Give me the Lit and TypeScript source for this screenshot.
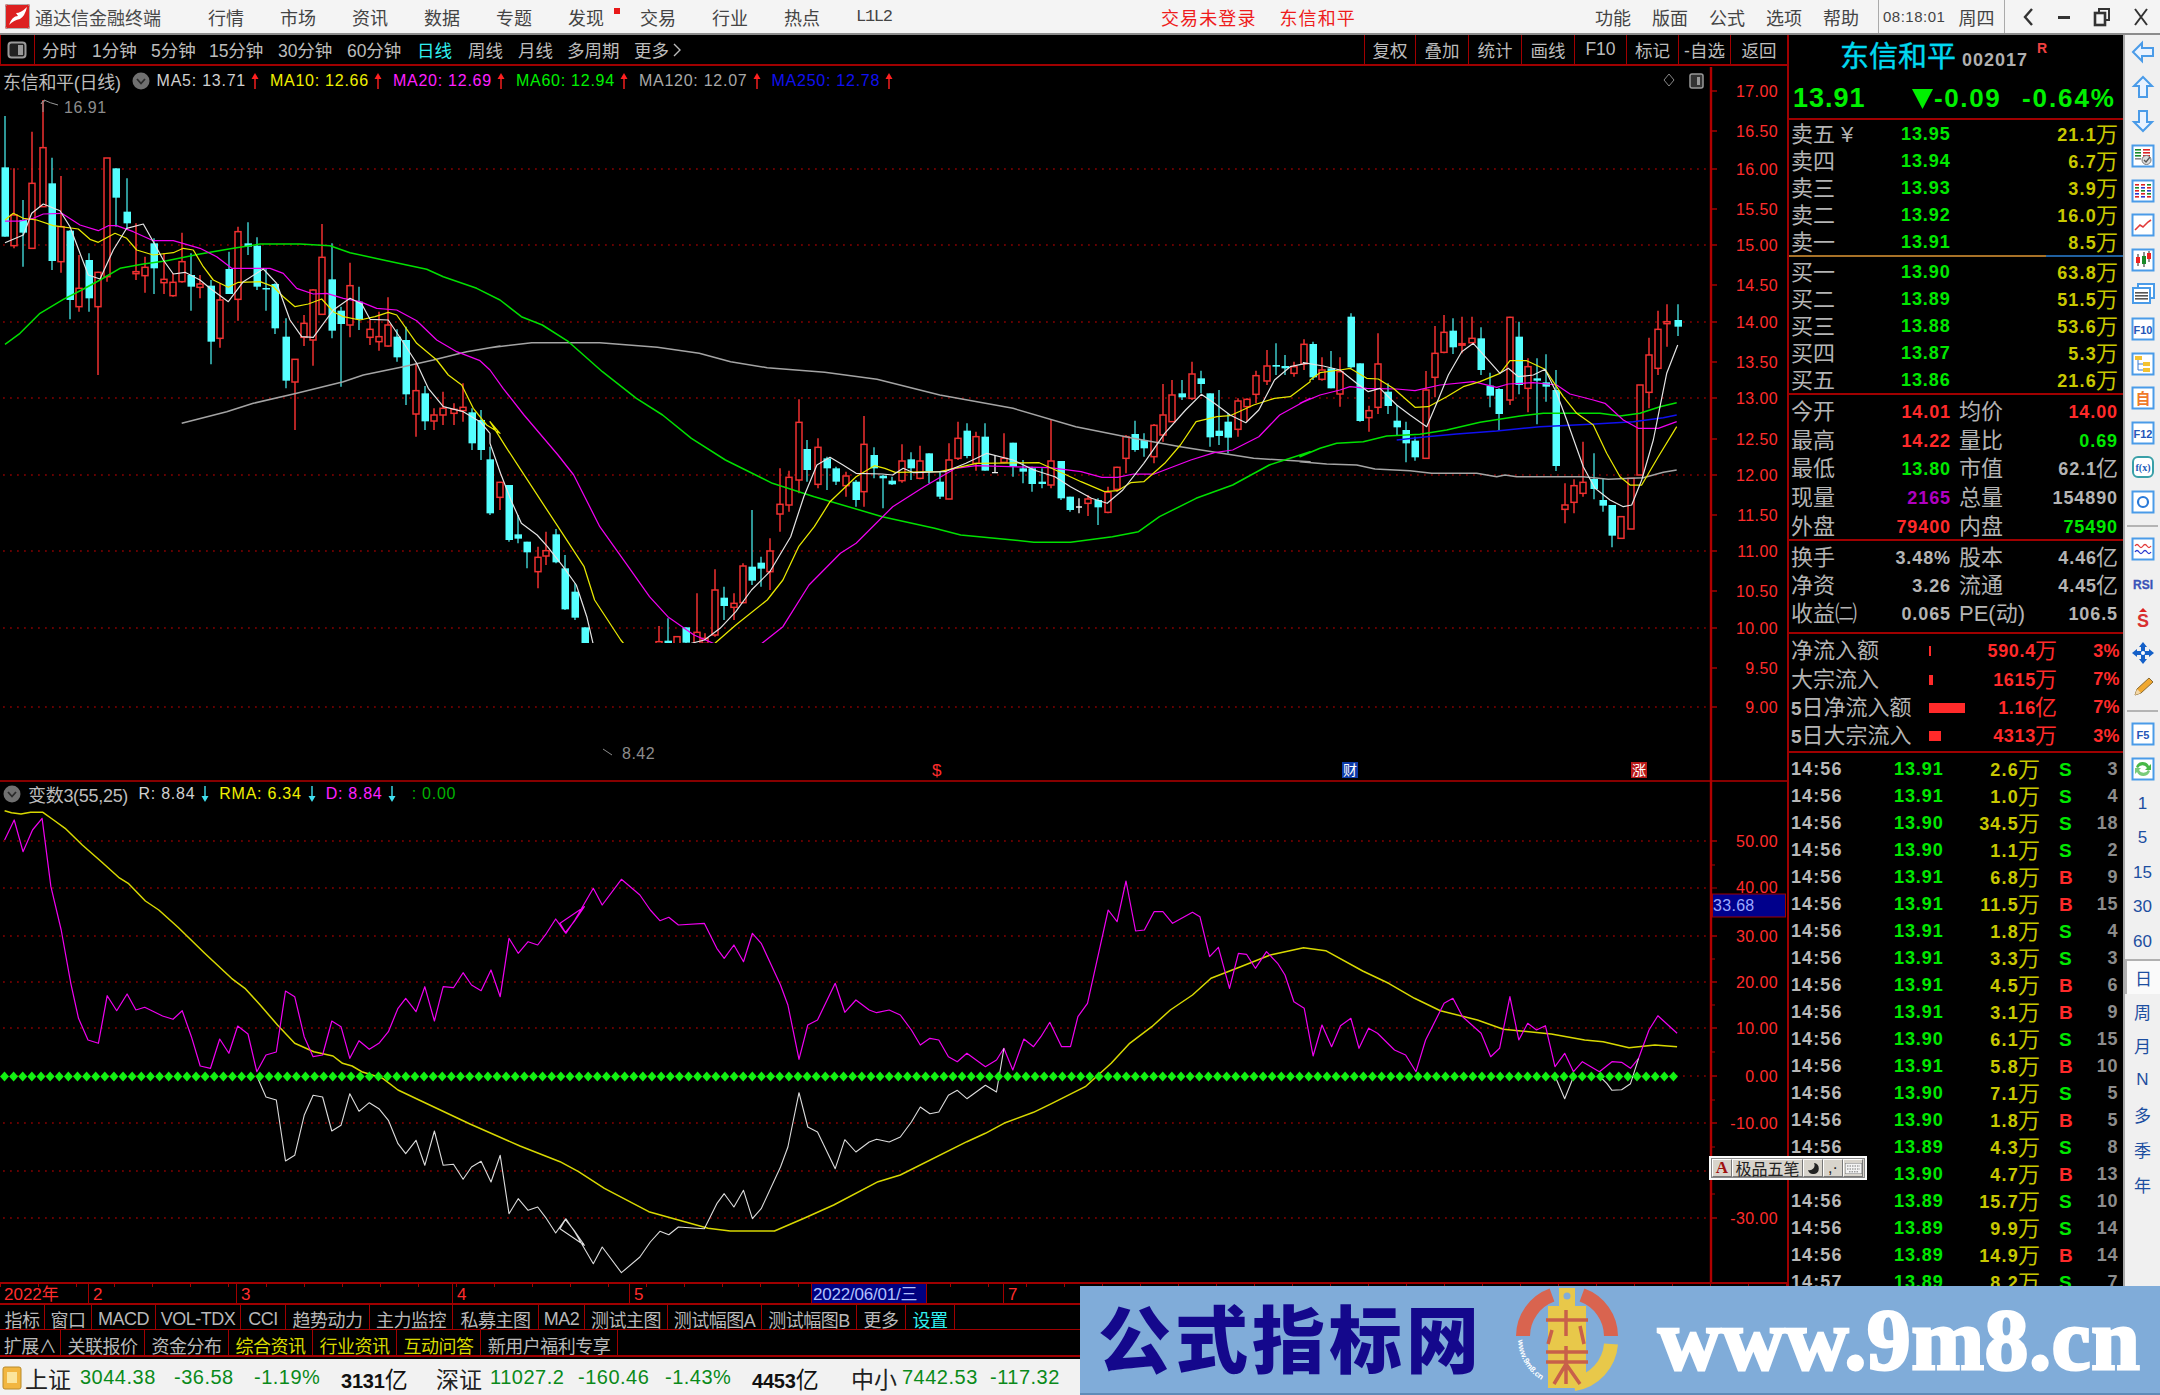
import { LitElement, html, css, svg } from "lit";
import { customElement } from "lit/decorators.js";

type C = [number, number, number, number, number, number];
type P = [number, number];
const CY = 0, RD = 1, WH = 2;

// candle readings: [x, kind, wick top, body top, body bottom, wick bottom], per crop's scale
const c7: C[] = [
[15,CY,108,262,470,470],[42,RD,265,405,497,505],[69,CY,360,420,458,560],[96,RD,155,310,505,505],[128,RD,60,203,380,380],
[155,CY,233,310,543,570],[182,RD,288,440,545,578],[209,CY,450,452,660,718],[236,RD,525,625,680,695],[267,CY,520,540,655,695],
[294,RD,575,577,680,885],[321,RD,234,234,590,605],[348,CY,265,265,353,440],[380,CY,295,395,430,450],[407,RD,430,575,581,600],
[434,RD,530,562,587,638],[461,CY,475,490,565,642],[492,RD,520,598,608,642],[519,RD,580,607,647,650],[546,RD,458,545,605,608],
[573,CY,520,585,620,692],[600,RD,585,612,622,655],[632,CY,600,617,785,853],[659,RD,610,660,775,803],[686,CY,515,567,642,642],
[713,RD,440,455,658,722],[744,CY,427,490,500,525],[771,CY,472,497,620,630],[798,CY,565,624,628,692],[825,CY,610,612,745,762],
[857,CY,715,770,902,925],[884,RD,838,838,906,1050],[911,RD,705,730,772,798],[938,RD,628,630,780,857],[965,RD,432,532,703,705],
[997,CY,490,598,752,775],[1024,CY,680,692,732,920],[1051,RD,548,617,735,772],[1078,CY,620,665,718,750],[1109,RD,720,748,772,795],
[1136,RD,695,770,785,812],[1163,RD,652,735,798,800],[1190,CY,748,770,832,845],[1217,CY,740,780,943,975],[1249,RD,850,932,1002,1070],
[1276,CY,918,940,1024,1050],[1303,RD,985,1005,1023,1050],[1330,RD,935,985,1005,1035],[1361,RD,970,988,1000,1035],[1388,RD,910,982,992,1025],
[1415,CY,985,997,1090,1110],[1443,CY,990,1020,1110,1140]];
const c11: C[] = [
[0,CY,440,478,640,645],[19,RD,545,547,592,630],[36,CY,555,555,720,725],[53,CY,645,703,716,730],[70,CY,725,725,757,805],
[91,RD,740,772,815,865],[108,RD,695,752,768,795],[126,CY,687,703,787,790],[143,CY,765,805,928,930],[163,CY,850,875,953,960],
[181,CY,982,982,1100,1100],[323,RD,978,1025,1100,1100],[341,CY,955,1022,1100,1100],[358,RD,1010,1010,1100,1100],[375,CY,982,982,1028,1060],
[395,RD,880,997,1100,1100],[412,RD,1000,1015,1030,1100],[430,RD,808,870,1005,1010],[447,CY,860,893,918,960],[467,RD,880,910,922,960],
[484,RD,790,798,908,910],[501,CY,630,800,842,855],[519,CY,770,788,806,860],[536,RD,715,753,815,870],[555,RD,505,613,642,695],
[572,RD,512,532,615,635],[590,RD,298,367,540,580],[607,CY,420,447,510,545],[627,RD,415,442,553,565],[645,CY,470,475,505,570],
[662,CY,500,505,545,555],[680,RD,515,528,557,590],[699,CY,540,545,600,620],[716,RD,348,433,575,620],[734,CY,442,465,505,535],
[751,CY,525,527,535,625],[768,CY,530,542,553,555],[787,RD,433,483,542,548],[805,CY,457,478,505,540],[822,RD,437,483,535,538],
[840,CY,460,460,515,550],[860,CY,515,545,590,597],[877,RD,430,480,597,598],[894,RD,365,415,475,480],[912,CY,370,392,468,475],
[929,RD,395,410,490,512],[947,CY,370,410,512,512],[965,WH,465,515,517,520],[983,RD,400,475,487,490],[1000,CY,428,428,500,530],
[1020,CY,480,505,515,550],[1037,CY,500,505,552,575],[1055,CY,505,545,552,565],[1072,RD,360,483,555,565],[1091,CY,483,483,595,600],
[1109,CY,590,590,630,635],[1126,WH,595,618,622,640],[1144,RD,585,597,610,648],[1162,CY,595,600,622,675],[1181,RD,560,577,637,640],
[1198,RD,500,502,568,575],[1216,RD,405,410,475,520],[1233,CY,362,402,450,455],[1251,CY,400,420,445,470],[1269,RD,372,376,470,490],
[1287,RD,252,345,405,425],[1304,RD,240,285,365,365],[1324,CY,240,280,292,300],[1342,RD,185,222,295,300],[1359,CY,212,235,252,280],
[1376,CY,280,280,412,440],[1394,CY,270,392,408,435],[1412,CY,340,365,413,460],[1430,RD,295,303,388,410],[1448,RD,295,298,320,365],
[1465,RD,212,227,283,310],[1485,RD,150,198,243,255],[1502,CY,130,195,200,225],[1520,CY,165,198,205,225],[1537,RD,185,200,220,230]];
const c10: C[] = [
[13,RD,148,163,222,240],[40,CY,155,162,262,270],[67,RD,202,240,268,272],[94,CY,183,235,295,295],[121,RD,202,245,312,350],
[152,CY,70,80,232,235],[179,CY,220,220,393,395],[206,RD,347,362,383,425],[233,RD,130,222,352,372],[265,CY,280,305,348,372],
[292,CY,345,392,412,435],[319,CY,395,420,460,517],[346,CY,440,452,502,512],[377,RD,243,300,505,505],[404,RD,108,190,262,322],
[431,RD,75,127,187,190],[458,CY,85,122,172,192],[485,RD,80,161,163,190],[517,RD,80,145,158,160],[544,CY,112,145,240,255],
[571,CY,248,287,317,352],[598,CY,295,297,372,422],[629,RD,80,82,330,345],[656,CY,95,140,285,313],[683,RD,205,230,295,367],
[710,CY,205,265,272,403],[737,CY,193,277,290,335],[769,CY,240,300,528,543],[796,RD,580,645,658,700],[823,RD,568,587,637,670],
[850,RD,455,577,610,620],[881,CY,490,567,597,628],[908,CY,565,630,647,665],[935,CY,645,645,737,772],[962,RD,680,680,745,745],
[993,RD,565,565,717,717],[1020,RD,285,285,555,555],[1047,RD,143,195,307,355],[1074,RD,62,118,235,255],[1101,RD,43,95,101,170],
[1133,CY,43,90,110,138]];

const f7 = (x: number) => x / 3, g7 = (y: number) => 80 + y / 3;
const f11 = (x: number) => 490 + x / 1.912, g11 = (y: number) => 300 + y / 3;
const f10 = (x: number) => 1300 + x / 3, g10 = (y: number) => 290 + y / 3;
const f9 = (x: number) => x / 2.613, g9 = (y: number) => 770 + y / 3;
const f12 = (x: number) => 560 + x / 1.3517, g12 = (y: number) => 860 + y / 3;

const candles = [
  ...c7.map((c) => [f7(c[0]), c[1], g7(c[2]), g7(c[3]), g7(c[4]), g7(c[5])]),
  ...c11.map((c) => [f11(c[0]), c[1], g11(c[2]), g11(c[3]), g11(c[4]), g11(c[5])]),
  ...c10.map((c) => [f10(c[0]), c[1], g10(c[2]), g10(c[3]), g10(c[4]), g10(c[5])]),
];

const conv = (flat: number[], fx: (n: number) => number, fy: (n: number) => number): P[] => {
  const out: P[] = [];
  for (let i = 0; i < flat.length; i += 2) out.push([fx(flat[i]), fy(flat[i + 1])]);
  return out;
};
const str = (p: P[]) => p.map((q) => `${q[0].toFixed(1)},${q[1].toFixed(1)}`).join(" ");

const maWhite = str([
  ...conv([15,488,70,465,95,400,130,372,180,392,210,440,240,520,265,585,300,597,340,510,380,445,430,432,460,485,490,540,520,582,555,577,600,600,630,625,685,665,730,605,790,567,830,610,870,720,905,770,940,772,1000,690,1050,655,1085,672,1110,718,1165,720,1205,780,1250,850,1285,925,1330,980,1390,995,1440,1025,1470,1060], f7, g7),
  ...conv([0,430,20,520,40,600,60,670,90,705,110,740,140,800,165,855,185,950,197,1030,200,1100,382,1100,385,1030,410,1020,440,985,470,935,500,870,535,815,575,710,600,590,625,495,650,472,675,495,700,520,750,522,770,525,790,505,810,518,870,515,910,490,950,460,1000,480,1040,510,1080,530,1110,560,1150,595,1180,610,1210,570,1250,490,1290,400,1330,330,1360,283,1385,310,1415,345,1445,368,1470,330,1500,240,1530,200,1560,190], f11, g11),
  ...conv([10,218,70,228,120,240,170,280,205,305,240,295,290,345,330,375,380,410,410,340,445,255,485,185,520,160,560,205,600,250,625,235,655,260,700,255,735,238,770,310,800,390,850,530,885,595,930,630,970,650,995,645,1025,570,1060,450,1100,250,1133,165], f10, g10),
]);
const maYellow = str([
  ...conv([15,420,40,400,70,415,110,420,160,437,235,447,270,478,295,487,345,460,380,475,410,510,460,525,520,518,550,505,580,510,610,560,640,600,685,622,715,607,780,605,820,620,850,650,885,680,925,672,965,657,1000,695,1030,710,1080,720,1125,710,1165,697,1190,705,1250,790,1310,840,1345,885,1385,915,1420,985,1460,1035,1500,1060], f7, g7),
  ...conv([0,365,30,440,80,560,130,680,180,800,200,900,250,1020,258,1035,262,1100,425,1100,430,1030,470,975,530,900,560,840,590,740,620,680,650,605,700,530,735,497,755,505,775,517,860,515,930,490,1050,488,1095,520,1130,545,1175,575,1200,572,1225,548,1250,545,1290,490,1320,435,1350,365,1390,350,1415,347,1460,315,1500,295,1530,290,1568,245], f11, g11),
  ...conv([30,270,60,248,120,240,150,235,200,265,235,267,280,295,345,352,385,350,440,320,490,290,540,275,600,250,630,212,680,212,735,238,790,320,830,370,880,405,920,490,960,560,990,585,1025,585,1075,500,1130,410], f10, g10),
]);
const maMagenta = str([
  ...conv([15,423,60,423,100,415,130,402,185,400,240,435,295,452,325,437,350,437,400,455,460,482,520,482,600,505,650,530,695,565,810,565,850,580,890,625,940,642,980,640,1030,655,1080,665,1130,685,1190,690,1250,722,1310,780,1370,815,1440,842,1470,870], f7, g7),
  ...conv([0,210,25,265,65,345,130,465,160,525,210,680,260,790,305,890,340,950,390,1005,430,1032,435,1100,515,1100,520,1030,560,980,610,855,670,760,700,730,770,620,830,560,890,505,930,497,1070,503,1130,515,1170,532,1200,532,1230,522,1270,522,1340,480,1385,458,1420,450,1470,410,1510,345,1568,295], f11, g11),
  ...conv([0,340,60,315,120,300,150,290,200,295,290,297,345,302,420,285,520,275,590,292,625,282,700,278,770,285,810,312,880,330,915,340,970,390,1015,415,1075,415,1130,395], f10, g10),
]);
const maGreen = str([
  ...conv([15,793,60,760,120,700,190,658,245,630,300,600,360,565,430,552,500,542,600,522,700,505,780,492,900,492,990,497,1050,518,1150,540,1280,568,1330,590,1430,625,1500,660], f7, g7),
  ...conv([60,50,100,75,150,125,215,215,280,295,330,345,385,415,450,480,540,550,620,590,750,650,850,685,900,705,1000,720,1040,727,1110,727,1190,710,1240,695,1280,650,1350,595,1420,555,1490,495,1568,455], f11, g11),
  ...conv([0,500,60,475,110,460,190,455,260,438,360,433,440,420,540,397,660,378,730,370,900,370,960,378,1020,370,1080,350,1130,338], f10, g10),
]);
const maGray = str([
  ...conv([545,1030,680,995,760,970,890,940,1030,905,1090,885,1210,860,1300,840,1400,815,1500,798], f7, g7),
  ...conv([0,143,80,128,210,128,320,142,400,160,460,185,530,203,640,217,740,238,860,285,1000,325,1120,380,1230,415,1320,440,1460,475,1568,485], f11, g11),
  ...conv([0,515,80,522,170,525,225,537,330,542,395,550,530,550,590,560,615,555,650,560,755,560,850,560,925,568,1030,563,1090,547,1130,540], f10, g10),
]);
const maBlue = str(conv([290,450,380,440,470,432,590,423,720,410,870,403,1000,395,1090,383,1130,375], f10, g10));

const d9 = conv([12,210,37,150,60,245,85,180,110,145,133,350,160,480,185,640,205,745,230,810,257,820,280,677,305,722,332,672,355,720,378,712,425,738,452,748,476,722,500,800,523,888,550,895,574,807,598,850,621,768,648,792,671,905,695,855,722,846,746,663,770,680,795,800,818,860,843,855,867,753,891,770,914,865,938,812,965,838,990,820,1015,785,1040,715,1060,685,1087,725,1110,650,1135,753,1158,650,1185,653,1210,608,1232,645,1257,662,1283,600,1307,680,1330,505,1354,550,1380,515,1405,525,1428,490,1452,447,1477,488,1500,455,1527,410], f9, g9);
const d12 = conv([0,190,8,220,20,180,45,85,57,135,83,58,108,105,122,150,135,182,147,172,160,195,195,190,212,265,222,295,235,255,248,305,260,220,272,250,298,375,308,435,323,598,335,495,348,480,372,370,385,457,400,420,418,450,428,458,445,450,460,465,475,510,487,555,500,535,512,540,525,590,537,605,550,580,575,620,590,600,600,565,612,630,627,537,640,560,650,530,662,487,678,560,690,560,700,470,713,430,733,230,741,150,753,185,765,63,778,213,790,210,803,155,815,155,828,190,855,157,865,170,878,290,890,262,905,385,917,280,928,283,940,325,955,275,970,310,980,345,992,425,1006,445,1018,588,1030,495,1043,560,1055,497,1069,475,1080,565,1093,505,1105,520,1128,570,1143,585,1157,635,1170,540,1195,430,1207,415,1220,470,1245,520,1258,590,1270,565,1284,410,1296,540,1308,490,1320,510,1332,497,1345,620,1358,580,1370,635,1382,605,1405,635,1422,605,1435,607,1447,625,1458,595,1472,510,1484,467,1510,520], f12, g12);
const dAll = [...d9, ...d12];
const Z = 1076;
const mirror = (p: P): P => [p[0], Z + (Z - p[1])];
const whiteA = str([
  [f9(671), Z] as P,
  ...dAll.filter((p) => p[0] > 262 && p[0] <= f12(590)).map(mirror),
  [f12(600), g12(565)] as P,
]);
const whiteB = str([[f12(1345), Z] as P, mirror([f12(1358), g12(580)]), [f12(1370), g12(650)] as P]);
const whiteC = str([[f12(1405), Z] as P, [f12(1415), g12(670)] as P, mirror([f12(1422), g12(605)]), mirror([f12(1435), g12(607)]), mirror([f12(1447), g12(625)]), [f12(1458), g12(595)] as P]);
const rmaYellow = str([
  ...conv([12,122,30,128,55,132,80,127,112,127,140,150,170,175,215,225,265,275,310,322,335,340,380,393,415,420,465,472,535,550,605,625,640,655,680,705,725,765,770,820,820,845,870,858,895,880,920,888,945,905,1000,925,1040,960,1095,990], f9, g9),
  [470, 1124] as P, [520, 1146] as P,
  ...conv([0,905,25,935,60,985,120,1055,200,1105,230,1113,290,1113,330,1075,370,1035,430,965,460,945,550,845,575,820,600,790,640,757,665,730,710,680,745,610,770,550,800,500,825,450,855,405,880,355,920,320,960,285,1005,263,1035,272,1085,333,1120,370,1155,415,1190,452,1240,480,1275,508,1340,522,1385,540,1410,545,1445,563,1480,555,1510,560], f12, g12),
]);

const priceLabels: [string, number][] = [["17.00",91],["16.50",131],["16.00",169],["15.50",209],["15.00",245],["14.50",285],["14.00",322],["13.50",362],["13.00",398],["12.50",439],["12.00",475],["11.50",515],["11.00",551],["10.50",591],["10.00",628],["9.50",668],["9.00",707]];
const indLabels: [string, number][] = [["50.00",841],["30.00",936],["20.00",982],["10.00",1028],["0.00",1076],["-10.00",1123],["-30.00",1218]];
const priceGrid = [169,245,322,398,475,551,628,707];
const indGrid = [841,888,936,982,1028,1076,1123,1171,1218];

const sell = [["卖五","13.95","21.1"],["卖四","13.94","6.7"],["卖三","13.93","3.9"],["卖二","13.92","16.0"],["卖一","13.91","8.5"]];
const buy = [["买一","13.90","63.8"],["买二","13.89","51.5"],["买三","13.88","53.6"],["买四","13.87","5.3"],["买五","13.86","21.6"]];
const ticks: [string, string, string, string, string][] = [
["14:56","13.91","2.6","S","3"],["14:56","13.91","1.0","S","4"],["14:56","13.90","34.5","S","18"],["14:56","13.90","1.1","S","2"],
["14:56","13.91","6.8","B","9"],["14:56","13.91","11.5","B","15"],["14:56","13.91","1.8","S","4"],["14:56","13.91","3.3","S","3"],
["14:56","13.91","4.5","B","6"],["14:56","13.91","3.1","B","9"],["14:56","13.90","6.1","S","15"],["14:56","13.91","5.8","B","10"],
["14:56","13.90","7.1","S","5"],["14:56","13.90","1.8","B","5"],["14:56","13.89","4.3","S","8"],["14:56","13.90","4.7","B","13"],
["14:56","13.89","15.7","S","10"],["14:56","13.89","9.9","S","14"],["14:56","13.89","14.9","B","14"],["14:57","13.89","8.2","S","7"]];
const menus = ["行情","市场","资讯","数据","专题","发现","交易","行业","热点","L1L2"];
const periods: [string, number, boolean][] = [["分时",50,false],["1分钟",59,false],["5分钟",58,false],["15分钟",69,false],["30分钟",69,false],["60分钟",70,false],["日线",51,true],["周线",50,false],["月线",49,false],["多周期",67,false]];
const toolBtns: [string, number][] = [["复权",51],["叠加",53],["统计",53],["画线",53],["F10",52],["标记",52],["-自选",52],["返回",57]];
const tabsA: [string, number, string][] = [["指标",45,""],["窗口",47,""],["MACD",64,""],["VOL-TDX",85,""],["CCI",45,""],["趋势动力",84,""],["主力监控",83,""],["私募主图",86,""],["MA2",46,""],["测试主图",83,""],["测试幅图A",94,""],["测试幅图B",95,""],["更多",49,""],["设置",49,"cy"]];
const tabsB: [string, number, string][] = [["扩展∧",61,""],["关联报价",84,""],["资金分布",84,""],["综合资讯",84,"ye"],["行业资讯",84,"ye"],["互动问答",84,"ye"],["新用户福利专享",137,""]];
const timeCells: [string, number, string][] = [["2022年",88,""],["2",148,""],["3",216,""],["4",177,""],["5",182,""],["2022/06/01/三",115,"dt"],["",77,""],["7",700,""]];
const statusCells: [string, number, string][] = [["上证",55,"nm"],["3044.38",94,"gn"],["-36.58",80,"gn"],["-1.19%",87,"gn"],["3131亿",95,"bk"],["深证",54,"nm"],["11027.2",88,"gn"],["-160.46",87,"gn"],["-1.43%",87,"gn"],["4453亿",99,"bk"],["中小",51,"nm"],["7442.53",88,"gn"],["-117.32",80,"gn"]];

const frame = (inner: unknown) => svg`<rect x="1.5" y="1.5" width="21" height="21" fill="#fff" stroke="#4a9be8" stroke-width="2"/>${inner}`;
const bar = (y: number, col: string, x = 5, w = 14) => svg`<rect x=${x} y=${y} width=${w} height="1.6" fill=${col}/>`;
const btn = (i: unknown) => svg`${i}`;
const arrowFill = "#eaf3ff";
const sideIcons = [
  btn(svg`<path d="M2 12 L11 3 V8 H22 V16 H11 V21 Z" fill=${arrowFill} stroke="#4a9be8" stroke-width="2"/>`),
  btn(svg`<path d="M12 2 L21 11 H16 V22 H8 V11 H3 Z" fill=${arrowFill} stroke="#4a9be8" stroke-width="2"/>`),
  btn(svg`<path d="M12 22 L21 13 H16 V2 H8 V13 H3 Z" fill=${arrowFill} stroke="#4a9be8" stroke-width="2"/>`),
  frame(svg`${bar(5,"#d22",12,7)}${bar(8,"#d22",12,7)}${bar(11,"#d22",12,7)}${bar(5,"#1a8a2a",4,6)}${bar(8,"#1a8a2a",4,6)}${bar(11,"#1a8a2a",4,6)}${bar(14,"#888",4,6)}<circle cx="15.5" cy="16" r="4.5" fill="#ddd" stroke="#777"/><path d="M13 16 l2 2 l4 -5" fill="none" stroke="#555" stroke-width="1.3"/>`),
  frame(svg`${[5,8,11,14,17].map((y,i)=>svg`${bar(y,["#d22","#1a8a2a","#d22","#2a3ad0","#d22"][i],4,4)}${bar(y,["#d22","#2a3ad0","#1a8a2a","#d22","#2a3ad0"][i],10,4)}${bar(y,["#1a8a2a","#d22","#2a3ad0","#1a8a2a","#d22"][i],16,4)}`)}`),
  frame(svg`<path d="M4 17 L9 12 L12 14 L17 9 L20 7" fill="none" stroke="#e23a3a" stroke-width="1.6"/>`),
  frame(svg`<path d="M7 6 V18 M13 4 V19 M18 3 V14" stroke="#222" stroke-width="1"/><rect x="5" y="9" width="4" height="6" fill="#e22"/><rect x="11" y="8" width="4" height="8" fill="#1a8a2a"/><rect x="16" y="5" width="4" height="6" fill="#e22"/>`),
  btn(svg`<path d="M7 6 V2 H23 V16 H19" fill="#fff" stroke="#4a9be8" stroke-width="2"/><rect x="2" y="6" width="17" height="15" fill="#fff" stroke="#4a9be8" stroke-width="2"/>${bar(10,"#555",4,13)}${bar(13,"#555",4,13)}${bar(16,"#555",4,13)}`),
  frame(svg`<text x="12" y="17" text-anchor="middle" class="ictx" fill="#2456b8">F10</text>`),
  frame(svg`<rect x="4" y="4" width="7" height="4" fill="#f3c230"/><rect x="12" y="10" width="7" height="4" fill="#f3c230"/><rect x="12" y="16" width="7" height="4" fill="#f3c230"/><path d="M7 8 V18 H12 M7 12 H12" fill="none" stroke="#3a7ad0"/>`),
  frame(svg`<text x="12" y="18" text-anchor="middle" class="icb" fill="#f07a2a">自</text>`),
  frame(svg`<text x="12" y="17" text-anchor="middle" class="ictx" fill="#2456b8">F12</text>`),
  btn(svg`<rect x="2" y="2" width="20" height="20" rx="5" fill="#fff" stroke="#3aa0a8" stroke-width="2"/><text x="12" y="16" text-anchor="middle" class="icm" fill="#1a5ab8">f(x)</text>`),
  frame(svg`<circle cx="12" cy="12" r="5" fill="#fff" stroke="#2a7ad8" stroke-width="2.2"/>`),
  null,
  frame(svg`<path d="M4 9 q2 -3 4 0 t4 0 t4 0 t4 0" fill="none" stroke="#e23a3a" stroke-width="1.3"/><path d="M4 15 q2 -3 4 0 t4 0 t4 0 t4 0" fill="none" stroke="#2a3ad0" stroke-width="1.3"/>`),
  btn(svg`<text x="12" y="17" text-anchor="middle" class="icrsi" fill="#3a52b8">RSI</text>`),
  btn(svg`<path d="M12 2 L16 6 H8 Z" fill="#d22"/><text x="12" y="21" text-anchor="middle" class="icrs" fill="#d83030">S</text>`),
  btn(svg`<path d="M12 1 L16 6 H14 V10 H18 V8 L23 12 L18 16 V14 H14 V18 H16 L12 23 L8 18 H10 V14 H6 V16 L1 12 L6 8 V10 H10 V6 H8 Z" fill="#1460c8"/><circle cx="12" cy="12" r="2" fill="#fff"/>`),
  btn(svg`<path d="M4 20 L6 14 L18 3 L22 7 L10 18 Z" fill="#f0a830" stroke="#8a6a30"/><path d="M4 20 L6 14 L10 18 Z" fill="#f3d8a8"/>`),
  null,
  frame(svg`<text x="12" y="17" text-anchor="middle" class="ictx" fill="#2456b8">F5</text>`),
  frame(svg`<path d="M5 10 a7 7 0 0 1 13 -1 l2 -2 v6 h-6 l2 -2 a5 5 0 0 0 -9 0 Z" fill="#48b848"/><path d="M19 14 a7 7 0 0 1 -13 1 l-2 2 v-6 h6 l-2 2 a5 5 0 0 0 9 0 Z" fill="#7acb7a"/>`),
];
const sideLabels = ["1","5","15","30","60","日","周","月","N","多","季","年"];

const UpArrow = html`<svg class="arr" viewBox="0 0 10 18" width="10" height="18"><path d="M5 17 V5" stroke="#ff2020" stroke-width="1.4"/><path d="M1.5 7 L5 1 L8.5 7 Z" fill="#ff2020"/></svg>`;
const DnArrow = html`<svg class="arr" viewBox="0 0 10 18" width="10" height="18"><path d="M5 1 V13" stroke="#40e0f0" stroke-width="1.4"/><path d="M1.5 11 L5 17 L8.5 11 Z" fill="#40e0f0"/></svg>`;
const Chevron = html`<svg class="ball" viewBox="0 0 18 18" width="18" height="18"><circle cx="9" cy="9" r="8.5" fill="#707070"/><path d="M5 7 L9 11.5 L13 7" fill="none" stroke="#2a2a2a" stroke-width="1.8"/></svg>`;

@customElement("app-root")
export class AppRoot extends LitElement {
  static styles = css`
    :host { display: block; position: relative; width: 2160px; height: 1395px; overflow: hidden; background: #000;
      font-family: "Liberation Sans", "Noto Sans CJK SC", sans-serif; color: #bcbcbc; }
    * { box-sizing: border-box; }
    svg { display: block; }
    .titlebar { display: flex; align-items: center; height: 35px; background: #f4f4f4; border-bottom: 2px solid #8c8c8c; color: #444; font-size: 18px; white-space: nowrap; }
    .logo { margin-left: 5px; flex: none; }
    .brand { margin-left: 5px; width: 173px; color: #4a4a4a; }
    .mi { width: 72px; position: relative; }
    .dot { position: absolute; left: 46px; top: 4px; width: 6px; height: 6px; background: #e81818; }
    .l1 { font-size: 17px; font-family: "Liberation Mono", monospace; letter-spacing: -1.3px; }
    .alert { display: flex; gap: 23px; margin-left: 233px; width: 197px; color: #ee1c1c; flex: none; }
    .alert span { letter-spacing: 1.1px; }
    .fn { width: 57px; flex: none; }
    .fngroup { display: flex; margin-left: 237px; }
    .clock { display: flex; align-items: center; gap: 13px; height: 33px; width: 127px; padding-left: 4px; border-left: 1px solid #aaa; border-right: 1px solid #aaa; font-size: 15px; flex: none; margin-left: -2px; letter-spacing: .5px; }
    .clock b { font-weight: 400; font-size: 18px; letter-spacing: 0; }
    .winbtns { display: flex; align-items: center; gap: 0; margin-left: 5px; }
    .winbtns svg { margin: 0 11px; }
    .body { display: flex; height: 1324px; position: relative; }
    .main { width: 1789px; flex: none; display: flex; flex-direction: column; border-right: 2px solid #a00000; }
    .toolbar { height: 31px; display: flex; align-items: center; flex: none; border-bottom: 2px solid #a00000; font-size: 17.5px; white-space: nowrap; }
    .tcell { width: 35px; height: 29px; border-right: 1px solid #a00000; border-left: 1px solid #a00000; display: flex; align-items: center; justify-content: center; margin-right: 7px; }
    .period.on { color: #30f0f0; }
    .period { flex: none; }
    .more { display: inline-flex; align-items: center; gap: 3px; width: 732px; }
    .tbtn { flex: none; height: 29px; display: flex; align-items: center; justify-content: center; border-left: 1px solid #a00000; }
    .stage { position: relative; height: 1216px; flex: none; }
    .stage svg.chart { position: absolute; inset: 0; }
    .legend { position: absolute; left: 3px; top: 3px; display: flex; align-items: center; height: 24px; font-size: 16px; white-space: nowrap; }
    .legend.low { left: 3px; top: 716px; }
    .legend .ball { margin: 0 7px 0 11px; flex: none; }
    .legend.low .ball { margin: 0 7px 0 0; }
    .legend .name { font-size: 18px; letter-spacing: -.3px; }
    .legend .it { letter-spacing: .75px; }
    .legend .arr { margin: 0 10px 0 4px; flex: none; }
    .legend.low .arr { margin: 0 9px 0 5px; }
    .w { color: #d0d0d0; } .y { color: #f0f000; } .m { color: #ff20ff; } .g { color: #00f000; } .gr { color: #a8a8a8; } .b { color: #1010f0; } .dg { color: #00b000; }
    .axis text { font-family: "Liberation Sans", sans-serif; font-size: 16px; fill: #ff2c2c; letter-spacing: .4px; }
    .anno { font-family: "Liberation Sans", sans-serif; font-size: 16px; fill: #8c8c8c; letter-spacing: .5px; }
    .boxv { font-family: "Liberation Sans", sans-serif; font-size: 16px; fill: #9ca8ff; letter-spacing: .3px; }
    .mk { font-family: "Noto Sans CJK SC", sans-serif; font-size: 14px; fill: #fff; }
    .mkr { font-family: "Liberation Sans", sans-serif; font-size: 17px; fill: #ff2c2c; }
    .timeaxis { height: 23px; flex: none; display: flex; border-top: 2px solid #a00000; border-bottom: 2px solid #a00000; color: #ff2c2c; font-size: 17px; white-space: nowrap; overflow: hidden;
      background: repeating-linear-gradient(90deg, #a00000 0 1px, transparent 1px 38px) top left / 100% 3px no-repeat; }
    .tc { flex: none; padding-left: 4px; border-left: 1px solid #a00000; line-height: 22px; }
    .tc:first-child { border-left: 0; }
    .tc.dt { background: #000080; color: #b0c0ff; padding-left: 1px; letter-spacing: -.2px; }
    .tabs { display: flex; flex: none; border-bottom: 1px solid #a00000; font-size: 18px; color: #b8b8b8; white-space: nowrap; }
    .tabs.a { height: 25px; } .tabs.b { height: 27px; border-bottom: 2px solid #a00000; }
    .tab { flex: none; display: flex; align-items: center; justify-content: center; border-right: 1px solid #a00000; letter-spacing: -.5px; padding-top: 4px; }
    .tab.cy { color: #30f0f0; } .tab.ye { color: #d8d800; }
    .stub { flex: 1; background: #000; }
    .quote { width: 334px; flex: none; overflow: hidden; font-size: 18px; }
    .sec { border-bottom: 2px solid #a00000; }
    .head { height: 85px; display: flex; flex-direction: column; }
    .hname { display: flex; align-items: flex-start; padding-left: 51px; height: 50px; padding-top: 3px; }
    .hname .n { font-size: 29px; color: #00d8f0; line-height: 38px; -webkit-text-stroke: .4px #00d8f0; }
    .hname .c { font-size: 18px; font-weight: 700; color: #b0b0b0; margin-left: 6px; margin-top: 12px; letter-spacing: 1px; }
    .hname .r { font-size: 14px; font-weight: 700; color: #f04040; margin-left: 9px; margin-top: 2px; }
    .hprice { display: flex; align-items: center; font-weight: 700; color: #00f000; font-size: 27px; padding-left: 4px; height: 26px; }
    .hprice .p { width: 119px; letter-spacing: 1px; }
    .hprice .d { display: flex; align-items: center; width: 110px; gap: 1px; font-size: 26px; letter-spacing: 1.6px; }
    .hprice .pc { font-size: 26px; letter-spacing: 1.9px; }
    .ob { display: block; padding-top: 1px; height: 135px; }
    .orow { display: grid; grid-template-columns: 110px 60px 1fr; height: 27px; align-items: center; padding: 0 5px 0 2px; white-space: nowrap; }
    .lb { display: flex; align-items: center; font-size: 22px; color: #b4b4b4; line-height: 1; }
    .lb small { font-size: 22px; font-family: "Liberation Sans", sans-serif; margin-left: 6px; }
    .px { color: #00e800; font-weight: 700; letter-spacing: .9px; }
    .vol { display: flex; justify-content: flex-end; align-items: center; color: #c8c800; font-weight: 700; letter-spacing: 1.2px; line-height: 1; }
    .wan { font-size: 22px; font-weight: 400; letter-spacing: 0; margin-left: -1px; line-height: 1; }
    .split { height: 2px; background: linear-gradient(90deg, #a87228 77%, #2060a0 77%); }
    .buyblk { height: 138px; padding-top: 2px; }
    .stats { display: grid; grid-template-columns: 95px 65px 8px 1fr; padding: 3px 5px 0 2px; white-space: nowrap; align-items: center; }
    .stats.s1 { height: 146px; grid-auto-rows: 28.6px; }
    .stats.s2 { height: 93px; grid-auto-rows: 28px; padding-top: 3px; }
    .cell-v { display: flex; justify-content: flex-end; align-items: center; font-weight: 700; letter-spacing: .9px; line-height: 1; }
    .lab2 { grid-column: 4; display: flex; justify-content: space-between; align-items: center; }
    .rd { color: #ff2a2a; } .gn { color: #00e800; } .pu { color: #b000c0; } .gy { color: #b4b4b4; }
    .flows { height: 119px; padding: 3px 3px 0 2px; }
    .frow { display: grid; grid-template-columns: 138px 70px 58px 1fr; height: 28.4px; align-items: center; white-space: nowrap; }
    .fbar { display: block; background: #ff2a2a; height: 10px; }
    .fv { display: flex; align-items: center; color: #ff2a2a; font-weight: 700; letter-spacing: .7px; grid-column: 2 / 4; justify-self: end; grid-row: 1; line-height: 1; }
    .fp { color: #ff2a2a; font-weight: 700; text-align: right; letter-spacing: .4px; }
    .lbn { font-size: 22px; color: #b4b4b4; line-height: 1; }
    .lbn b { font-size: 19px; font-weight: 700; }
    .barbox { position: relative; grid-column: 2 / 4; grid-row: 1; height: 10px; }
    .trow { display: grid; grid-template-columns: 103px 55px 91px 19px 1fr; height: 27px; align-items: center; padding: 0 5px 0 2px; white-space: nowrap; }
    .tk { color: #b8b8b8; font-weight: 700; letter-spacing: 1.1px; }
    .sf { font-weight: 700; font-size: 19px; padding-left: 19px; }
    .sf.S { color: #00e800; } .sf.B { color: #ff2a2a; }
    .tn { text-align: right; font-weight: 700; color: #8c8c8c; letter-spacing: .6px; }
    .tickblk { padding-top: 3px; }
    .side { width: 37px; flex: none; background: #f0f0f0; border-left: 2px solid #a8a8a8; overflow: hidden; display: flex; flex-direction: column; }
    .si { height: 34.6px; display: flex; align-items: center; justify-content: center; flex: none; font-size: 17px; color: #1c4ea0; }
    .si svg { width: 24px; height: 24px; }
    .si.on { background: #fafafa; border-top: 2px solid #b0b0b0; border-left: 2px solid #b0b0b0; }
    .ssep { height: 12.4px; flex: none; display: flex; align-items: center; padding: 0 2px; }
    .ssep i { display: block; width: 100%; height: 2px; background: #b4b4b4; }
    .ictx { font: 700 11px "Liberation Sans", sans-serif; }
    .icb { font: 700 15px "Noto Sans CJK SC", sans-serif; }
    .icm { font: 700 10px "Liberation Serif", serif; }
    .icrsi { font: 700 12px "Liberation Sans", sans-serif; stroke: #3a52b8; stroke-width: .3px; }
    .icrs { font: 700 18px "Liberation Sans", sans-serif; }
    .status { height: 36px; display: flex; align-items: center; background: #f2f2f2; font-size: 20px; white-space: nowrap; padding-top: 1px; }
    .sicon { margin: 0 3px 0 2px; flex: none; }
    .st { flex: none; }
    .st.nm { font-size: 23px; color: #222; } .st.gn { color: #0a8a1a; letter-spacing: .5px; } .st.bk { color: #111; font-weight: 700; letter-spacing: -.2px; }
    .st.bk span { font-weight: 400; font-size: 23px; }
    .ime { position: absolute; left: 1709px; top: 1121px; width: 158px; height: 24px; background: #d8d4cc; border: 2px solid #fafafa; display: flex; align-items: stretch; padding: 1px; box-shadow: 0 0 0 1px #888 inset; color: #222; font-size: 16px; }
    .ime > * { display: flex; align-items: center; justify-content: center; border: 1px solid; border-color: #fff #777 #777 #fff; }
    .ime .a { width: 20px; font: 700 17px "Liberation Serif", serif; color: #a01010; }
    .ime .n { width: 71px; }
    .ime .k { width: 20px; }
    .overlay { position: absolute; left: 1080px; top: 1286px; right: 0; height: 109px; background: #80acd9; border-bottom: 2px solid #5f8bb8; display: block; }
    .ovin { display: flex; align-items: center; height: 107px; }
    .ovcn { margin: -8px 0 0 18px; width: 416px; font: 900 73px "Noto Sans CJK SC", sans-serif; color: #14088c; letter-spacing: 4px; line-height: 1; white-space: nowrap; }
    .ovlogo { flex: none; margin-right: 38px; }
    .ovurl { font: 700 87px "Liberation Serif", serif; color: #fff; -webkit-text-stroke: 3px #fff; white-space: nowrap; line-height: 1; margin-top: 0; letter-spacing: .9px; }
    .lgtx { font: 700 8px "Liberation Sans", sans-serif; }
  `;

  private candleSvg() {
    return candles.map(([x, k, wt, bt, bb, wb]) => {
      const cx = Math.round(x);
      if (k === RD) {
        return svg`<path d="M${cx} ${wt}V${bt}M${cx} ${bb}V${wb}" stroke="#f03030" stroke-width="1.5"/><rect x=${cx - 3} y=${bt} width="6" height=${Math.max(bb - bt, 1.5)} fill="#000" stroke="#f03030" stroke-width="1.5"/>`;
      }
      if (k === CY) {
        return svg`<path d="M${cx} ${wt}V${wb}" stroke="#3cc8c8" stroke-width="1.5"/><rect x=${cx - 3.5} y=${bt} width="7.5" height=${Math.max(bb - bt, 1.5)} fill="#54ffff"/>`;
      }
      return svg`<path d="M${cx} ${wt}V${wb}M${cx - 3} ${bt + 1}H${cx + 3}" stroke="#f0f0f0" stroke-width="1.3"/>`;
    });
  }

  private chart() {
    const diamonds = [];
    for (let i = 0; i < 184; i++) {
      const x = 4.5 + i * 9.12;
      diamonds.push(svg`<path d="M${x - 4.5} 1076.5L${x} 1071.5L${x + 4.5} 1076.5L${x} 1081.5Z" fill="#12f012"/>`);
    }
    return html`<svg class="chart" width="1787" height="1216" viewBox="0 66 1787 1216">
      <defs><clipPath id="topclip"><rect x="0" y="95" width="1709" height="548"/></clipPath></defs>
      <g stroke="#860000" stroke-width="1.6" stroke-dasharray="1.8 5.2">
        ${priceGrid.map((y) => svg`<path d="M3 ${y}H1709"/>`)}
        ${indGrid.map((y) => svg`<path d="M3 ${y}H1709"/>`)}
      </g>
      <g clip-path="url(#topclip)">
        ${this.candleSvg()}
        <g fill="none" stroke-linejoin="round">
          <polyline points=${maGray} stroke="#a4a4a4" stroke-width="1.5"/>
          <polyline points=${maBlue} stroke="#1010f0" stroke-width="1.5"/>
          <polyline points=${maGreen} stroke="#00e000" stroke-width="1.5"/>
          <polyline points=${maMagenta} stroke="#f000f0" stroke-width="1.25"/>
          <polyline points=${maYellow} stroke="#e8e800" stroke-width="1.25"/>
          <polyline points=${maWhite} stroke="#e4e4e4" stroke-width="1.2"/>
        </g>
      </g>
      <path d="M43 101V112M43 101L41 104M43 101H45M44 100Q50 103 58 105" fill="none" stroke="#9a9a9a" stroke-width="1"/>
      <text class="anno" x="64" y="113">16.91</text>
      <path d="M603 749L612 755" stroke="#8c8c8c"/><text class="anno" x="622" y="759">8.42</text>
      <text class="mkr" x="932" y="776">$</text>
      <rect x="1342" y="762" width="16" height="16" fill="#0d3aa8"/><text class="mk" x="1343" y="775">财</text>
      <rect x="1631" y="762" width="16" height="16" fill="#b81818"/><text class="mk" x="1632" y="775">涨</text>
      <path d="M1664 80L1669 74L1674 80L1669 86Z" fill="none" stroke="#888"/>
      <rect x="1690" y="74" width="13" height="14" rx="2" fill="#333" stroke="#999" stroke-width="1.5"/><rect x="1697" y="77" width="3" height="8" fill="#999"/>
      <path d="M0 781H1787" stroke="#860000" stroke-width="2.2"/>
      <g fill="none" stroke-linejoin="round">
        <polyline points=${rmaYellow} stroke="#d8d800" stroke-width="1.5"/>
        <polyline points=${str(dAll)} stroke="#f000f0" stroke-width="1.2"/>
        <polyline points=${whiteA} stroke="#dcdcdc" stroke-width="1.1"/>
        <polyline points=${whiteB} stroke="#dcdcdc" stroke-width="1.1"/>
        <polyline points=${whiteC} stroke="#dcdcdc" stroke-width="1.1"/>
      </g>
      <g>${diamonds}</g>
      <path d="M1711 67V1282" stroke="#b00000" stroke-width="2.4"/>
      <g class="axis">
        ${priceLabels.map(([t, y]) => svg`<path d="M1712 ${y}H1717" stroke="#b00000" stroke-width="1.4"/><text x="1778" y=${y + 6} text-anchor="end">${t}</text>`)}
        ${indLabels.map(([t, y]) => svg`<path d="M1712 ${y}H1717" stroke="#b00000" stroke-width="1.4"/><text x="1778" y=${y + 6} text-anchor="end">${t}</text>`)}
        <path d="M1712 888H1717M1712 1171H1717M1712 865H1715M1712 912H1715M1712 959H1715M1712 1005H1715M1712 1052H1715M1712 1100H1715M1712 1147H1715M1712 1194H1715" stroke="#b00000" stroke-width="1.2"/>
        <text x="1778" y="893" text-anchor="end">40.00</text>
      </g>
      <rect x="1712.5" y="894" width="73" height="23" fill="#00008c" stroke="#a00000"/>
      <text class="boxv" x="1713" y="911">33.68</text>
    </svg>`;
  }

  private fmtVol(v: string) {
    return html`<span class="vol">${v}<span class="wan">万</span></span>`;
  }

  render() {
    return html`
      <div class="titlebar">
        <svg class="logo" width="25" height="25" viewBox="0 0 25 25"><rect width="25" height="25" rx="2" fill="#dd2020"/><rect x=".5" y=".5" width="24" height="24" rx="2" fill="none" stroke="#b0b0b0"/><path d="M4 21 Q7 12 13 12 L11 9 Q16 9 22 3 Q20 12 15 15 Q9 16 4 21Z" fill="#fff"/></svg>
        <span class="brand">通达信金融终端</span>
        ${menus.map((m) => html`<span class="mi ${m === "L1L2" ? "l1" : ""}">${m}${m === "发现" ? html`<i class="dot"></i>` : null}</span>`)}
        <div class="alert"><span>交易未登录</span><span>东信和平</span></div>
        <div class="fngroup">${["功能","版面","公式","选项","帮助"].map((f) => html`<span class="fn">${f}</span>`)}</div>
        <div class="clock"><span>08:18:01</span><b>周四</b></div>
        <div class="winbtns">
          <svg width="14" height="20" viewBox="0 0 14 20"><path d="M11 2 L4 10 L11 18" fill="none" stroke="#333" stroke-width="2.4"/></svg>
          <svg width="14" height="20" viewBox="0 0 14 20"><rect x="1" y="9" width="12" height="3" fill="#333"/></svg>
          <svg width="18" height="20" viewBox="0 0 18 20"><path d="M6 5V2H16V13H13" fill="none" stroke="#333" stroke-width="2"/><rect x="2" y="6" width="10" height="12" fill="none" stroke="#333" stroke-width="2.6"/></svg>
          <svg width="16" height="20" viewBox="0 0 16 20"><path d="M2 2 L14 18 M14 2 L2 18" stroke="#333" stroke-width="2"/></svg>
        </div>
      </div>
      <div class="body">
        <div class="main">
          <div class="toolbar">
            <div class="tcell"><svg width="20" height="18" viewBox="0 0 20 18"><rect x="1.5" y="1.5" width="17" height="15" rx="3" fill="#222" stroke="#9a9a9a" stroke-width="2"/><rect x="11" y="4" width="5" height="10" fill="#9a9a9a"/></svg></div>
            ${periods.map(([t, w, on]) => html`<span class="period ${on ? "on" : ""}" style="width:${w}px">${t}</span>`)}
            <span class="more">更多<svg width="10" height="16" viewBox="0 0 10 16"><path d="M2 2 L8 8 L2 14" fill="none" stroke="#bbb" stroke-width="1.4"/></svg></span>
            ${toolBtns.map(([t, w]) => html`<span class="tbtn" style="width:${w}px">${t}</span>`)}
          </div>
          <div class="stage">
            ${this.chart()}
            <div class="legend">
              <span class="name">东信和平(日线)</span>${Chevron}
              <span class="it w">MA5: 13.71</span>${UpArrow}
              <span class="it y">MA10: 12.66</span>${UpArrow}
              <span class="it m">MA20: 12.69</span>${UpArrow}
              <span class="it g">MA60: 12.94</span>${UpArrow}
              <span class="it gr">MA120: 12.07</span>${UpArrow}
              <span class="it b">MA250: 12.78</span>${UpArrow}
            </div>
            <div class="legend low">
              ${Chevron}<span class="name">变数3(55,25)</span>
              <span class="it w">&nbsp;&nbsp;R: 8.84</span>${DnArrow}
              <span class="it y">RMA: 6.34</span>${DnArrow}
              <span class="it m">D: 8.84</span>${DnArrow}
              <span class="it dg">&nbsp;: 0.00</span>
            </div>
          </div>
          <div class="timeaxis">${timeCells.map(([t, w, c]) => html`<span class="tc ${c}" style="width:${w}px">${t}</span>`)}</div>
          <div class="tabs a">${tabsA.map(([t, w, c]) => html`<span class="tab ${c}" style="width:${w}px">${t}</span>`)}<span class="stub"></span></div>
          <div class="tabs b">${tabsB.map(([t, w, c]) => html`<span class="tab ${c}" style="width:${w}px">${t}</span>`)}<span class="stub"></span></div>
        </div>
        <div class="quote">
          <div class="sec head">
            <div class="hname"><span class="n">东信和平</span><span class="c">002017</span><span class="r">R</span></div>
            <div class="hprice"><span class="p">13.91</span><span class="d"><svg width="21" height="21" viewBox="0 0 21 21"><path d="M0 1H21L10.5 21Z" fill="#00f000"/></svg>-0.09</span><span class="pc">-0.64%</span></div>
          </div>
          <div class="ob">
            ${sell.map(([l, p, v], i) => html`<div class="orow"><span class="lb">${l}${i === 0 ? html`<small>¥</small>` : null}</span><span class="px">${p}</span>${this.fmtVol(v)}</div>`)}
          </div>
          <div class="split"></div>
          <div class="sec buyblk">
            ${buy.map(([l, p, v]) => html`<div class="orow"><span class="lb">${l}</span><span class="px">${p}</span>${this.fmtVol(v)}</div>`)}
          </div>
          <div class="sec stats s1">
            ${[["今开","14.01","rd","均价","14.00","rd"],["最高","14.22","rd","量比","0.69","gn"],["最低","13.80","gn","市值","62.1亿","gy"],["现量","2165","pu","总量","154890","gy"],["外盘","79400","rd","内盘","75490","gn"]].map((r) => this.statRow(r))}
          </div>
          <div class="sec stats s2">
            ${[["换手","3.48%","gy","股本","4.46亿","gy"],["净资","3.26","gy","流通","4.45亿","gy"],["收益㈡","0.065","gy","PE(动)","106.5","gy"]].map((r) => this.statRow(r))}
          </div>
          <div class="sec flows">
            ${([["净流入额","",2,"590.4","万","3%"],["大宗流入","",4,"1615","万","7%"],["净流入额","5日",36,"1.16","亿","7%"],["大宗流入","5日",12,"4313","万","3%"]] as [string,string,number,string,string,string][]).map(([l, pre, w, v, u, pc]) => html`
              <div class="frow">
                <span class="lbn">${pre ? html`<b>5</b>日` : null}${l}</span>
                <span class="barbox"><i class="fbar" style="width:${w}px"></i></span>
                <span class="fv">${v}<span class="wan">${u}</span></span>
                <span class="fp">${pc}</span>
              </div>`)}
          </div>
          <div class="tickblk">
            ${ticks.map(([t, p, v, f, n]) => html`<div class="trow"><span class="tk">${t}</span><span class="px">${p}</span>${this.fmtVol(v)}<span class="sf ${f}">${f}</span><span class="tn">${n}</span></div>`)}
          </div>
        </div>
        <div class="side">
          ${sideIcons.map((ic) => ic === null ? html`<div class="ssep"><i></i></div>` : html`<div class="si"><svg viewBox="0 0 24 24">${ic}</svg></div>`)}
          ${sideLabels.map((t) => html`<div class="si ${t === "日" ? "on" : ""}">${t}</div>`)}
        </div>
        <div class="ime">
          <span class="a">A</span><span class="n">极品五笔</span>
          <span class="k"><svg width="13" height="13" viewBox="0 0 13 13"><path d="M7 1 A5.5 5.5 0 1 1 1 8 A5 5 0 0 0 7 1Z" fill="#222"/></svg></span>
          <span class="k">,·</span>
          <span class="k"><svg width="17" height="11" viewBox="0 0 17 11"><rect width="17" height="11" fill="#f4f4f4" stroke="#777"/><path d="M2 3H15M2 6H15M4 8.8H13" stroke="#777" stroke-dasharray="1.5 1"/></svg></span>
        </div>
      </div>
      <div class="status">
        <svg class="sicon" width="20" height="24" viewBox="0 0 20 24"><rect x="1" y="1" width="18" height="22" rx="2" fill="#f2b640" stroke="#b88a2a"/><rect x="5" y="6" width="10" height="11" fill="#fbe59c"/></svg>
        ${statusCells.map(([t, w, c]) => html`<span class="st ${c}" style="width:${w}px">${c === "bk" ? html`${t.slice(0, -1)}<span>亿</span>` : t}</span>`)}
      </div>
      <div class="overlay">
        <div class="ovin">
          <span class="ovcn">公式指标网</span>
          <svg class="ovlogo" width="106" height="107" viewBox="0 0 106 107">
            <path d="M9 50 A44 44 0 0 1 38 9" fill="none" stroke="#d9644f" stroke-width="14"/>
            <path d="M68 9 A44 44 0 0 1 97 50" fill="none" stroke="#d9644f" stroke-width="14"/>
            <path d="M97 58 A44 44 0 0 1 60 98" fill="none" stroke="#e8c84a" stroke-width="14"/>
            <path d="M45 2 H61 V20 H72 V102 H34 V20 H45 Z" fill="#e8c84a"/>
            <circle cx="53" cy="10" r="3.5" fill="#80acd9"/>
            <path d="M32 34 H74 M52 24 V50 M38 44 L34 58 M66 40 L70 58 M32 66 H74 M32 76 H74 M52 60 V98 M40 98 L52 78 L66 98" fill="none" stroke="#c8604a" stroke-width="3.5"/>
            <defs><path id="lgarc" d="M4 54 A49 49 0 0 0 42 100"/></defs>
            <text class="lgtx" fill="#fff"><textPath href="#lgarc">www.9m8.cn</textPath></text>
          </svg>
          <span class="ovurl">www.9m8.cn</span>
        </div>
      </div>
    `;
  }

  private statRow(r: string[]) {
    const val = (v: string, c: string) =>
      v.endsWith("亿") ? html`<span class="cell-v ${c}">${v.slice(0, -1)}<span class="wan">亿</span></span>` : html`<span class="cell-v ${c}">${v}</span>`;
    return html`<span class="lb">${r[0]}</span>${val(r[1], r[2])}<span></span><span class="lab2"><span class="lb">${r[3]}</span>${val(r[4], r[5])}</span>`;
  }
}
